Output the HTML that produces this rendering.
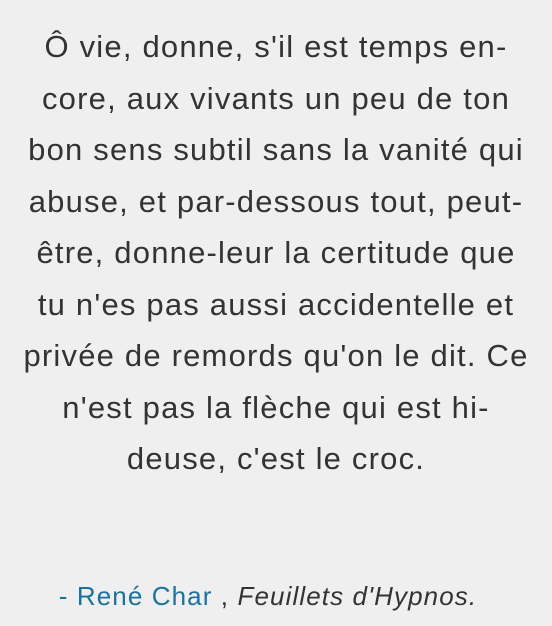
<!DOCTYPE html>
<html><head><meta charset="utf-8"><style>
html,body{margin:0;padding:0;background:#efefef;width:552px;height:626px;overflow:hidden}
.q{position:absolute;top:21px;left:0;width:552px;text-align:center;font-family:"Liberation Sans",sans-serif;font-size:31px;letter-spacing:1.2px;line-height:51.5px;color:#333;white-space:nowrap}
.a{position:absolute;top:581px;left:-8px;width:552px;text-align:center;font-family:"Liberation Sans",sans-serif;font-size:26px;letter-spacing:1.1px;color:#333;white-space:nowrap}
.a b{font-weight:normal;color:#1b739b}
</style></head><body>
<div class="q">Ô vie, donne, s'il est temps en-<br>core, aux vivants un peu de ton<br>bon sens subtil sans la vanité qui<br>abuse, et par-dessous tout, peut-<br>être, donne-leur la certitude que<br>tu n'es pas aussi accidentelle et<br>privée de remords qu'on le dit. Ce<br>n'est pas la flèche qui est hi-<br>deuse, c'est le croc.</div>
<div class="a"><b>- René Char</b> , <i>Feuillets d'Hypnos.</i></div>
</body></html>
